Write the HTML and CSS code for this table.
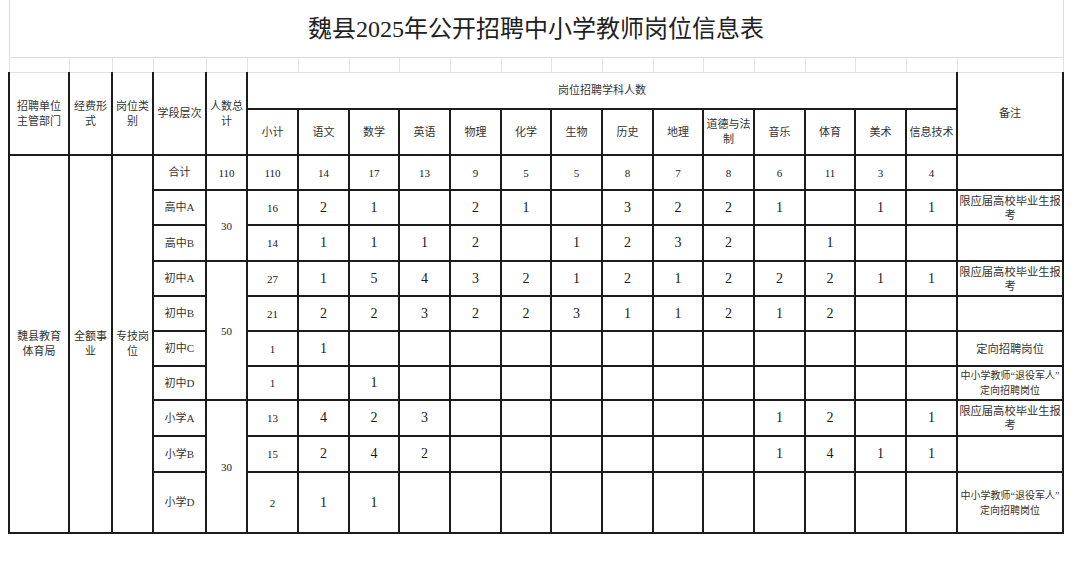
FILE: index.html
```html
<!DOCTYPE html>
<html lang="zh-CN">
<head>
<meta charset="utf-8">
<title>魏县2025年公开招聘中小学教师岗位信息表</title>
<link rel="stylesheet" href="styles.css">
</head>
<body>
<table class="sheet">
  <colgroup>
    <col class="c-dept"><col class="c-fund"><col class="c-type"><col class="c-level"><col class="c-total">
    <col class="c-s"><col class="c-s"><col class="c-s2"><col class="c-s"><col class="c-s"><col class="c-s2"><col class="c-s"><col class="c-s"><col class="c-s2"><col class="c-s"><col class="c-s"><col class="c-s2"><col class="c-s"><col class="c-s">
    <col class="c-note">
  </colgroup>
  <tbody>
    <tr class="r-title"><td class="title" colspan="20">魏县2025年公开招聘中小学教师岗位信息表</td></tr>
    <tr class="r-gap"><td></td><td></td><td></td><td></td><td></td><td></td><td></td><td></td><td></td><td></td><td></td><td></td><td></td><td></td><td></td><td></td><td></td><td></td><td></td><td></td></tr>
    <tr class="r-h1 hd">
      <td rowspan="2">招聘单位<br>主管部门</td>
      <td rowspan="2">经费形<br>式</td>
      <td rowspan="2">岗位类<br>别</td>
      <td rowspan="2">学段层次</td>
      <td rowspan="2">人数总<br>计</td>
      <td colspan="14">岗位招聘学科人数</td>
      <td rowspan="2">备注</td>
    </tr>
    <tr class="r-h2 hd">
      <td>小计</td><td>语文</td><td>数学</td><td>英语</td><td>物理</td><td>化学</td><td>生物</td><td>历史</td><td>地理</td><td>道德与法<br>制</td><td>音乐</td><td>体育</td><td>美术</td><td>信息技术</td>
    </tr>
    <tr class="r35 sm">
      <td rowspan="10" class="lbl">魏县教育<br>体育局</td>
      <td rowspan="10" class="lbl">全额事<br>业</td>
      <td rowspan="10" class="lbl">专技岗<br>位</td>
      <td class="lbl">合计</td>
      <td>110</td><td>110</td><td>14</td><td>17</td><td>13</td><td>9</td><td>5</td><td>5</td><td>8</td><td>7</td><td>8</td><td>6</td><td>11</td><td>3</td><td>4</td>
      <td></td>
    </tr>
    <tr class="r35">
      <td class="lbl">高中A</td>
      <td rowspan="2" class="s">30</td>
      <td class="s">16</td><td>2</td><td>1</td><td></td><td>2</td><td>1</td><td></td><td>3</td><td>2</td><td>2</td><td>1</td><td></td><td>1</td><td>1</td>
      <td class="note">限应届高校毕业生报<br>考</td>
    </tr>
    <tr class="r36">
      <td class="lbl">高中B</td>
      <td class="s">14</td><td>1</td><td>1</td><td>1</td><td>2</td><td></td><td>1</td><td>2</td><td>3</td><td>2</td><td></td><td>1</td><td></td><td></td>
      <td></td>
    </tr>
    <tr class="r35">
      <td class="lbl">初中A</td>
      <td rowspan="4" class="s">50</td>
      <td class="s">27</td><td>1</td><td>5</td><td>4</td><td>3</td><td>2</td><td>1</td><td>2</td><td>1</td><td>2</td><td>2</td><td>2</td><td>1</td><td>1</td>
      <td class="note">限应届高校毕业生报<br>考</td>
    </tr>
    <tr class="r35">
      <td class="lbl">初中B</td>
      <td class="s">21</td><td>2</td><td>2</td><td>3</td><td>2</td><td>2</td><td>3</td><td>1</td><td>1</td><td>2</td><td>1</td><td>2</td><td></td><td></td>
      <td></td>
    </tr>
    <tr class="r35">
      <td class="lbl">初中C</td>
      <td class="s">1</td><td>1</td><td></td><td></td><td></td><td></td><td></td><td></td><td></td><td></td><td></td><td></td><td></td><td></td>
      <td class="note">定向招聘岗位</td>
    </tr>
    <tr class="r34">
      <td class="lbl">初中D</td>
      <td class="s">1</td><td></td><td>1</td><td></td><td></td><td></td><td></td><td></td><td></td><td></td><td></td><td></td><td></td><td></td>
      <td class="note small">中小学教师“退役军人”<br>定向招聘岗位</td>
    </tr>
    <tr class="r36">
      <td class="lbl">小学A</td>
      <td rowspan="3" class="s">30</td>
      <td class="s">13</td><td>4</td><td>2</td><td>3</td><td></td><td></td><td></td><td></td><td></td><td></td><td>1</td><td>2</td><td></td><td>1</td>
      <td class="note">限应届高校毕业生报<br>考</td>
    </tr>
    <tr class="r36">
      <td class="lbl">小学B</td>
      <td class="s">15</td><td>2</td><td>4</td><td>2</td><td></td><td></td><td></td><td></td><td></td><td></td><td>1</td><td>4</td><td>1</td><td>1</td>
      <td></td>
    </tr>
    <tr class="r61">
      <td class="lbl">小学D</td>
      <td class="s">2</td><td>1</td><td>1</td><td></td><td></td><td></td><td></td><td></td><td></td><td></td><td></td><td></td><td></td><td></td>
      <td class="note small">中小学教师“退役军人”<br>定向招聘岗位</td>
    </tr>
  </tbody>
</table>
</body>
</html>
```

FILE: styles.css
```css
html, body {
  margin: 0;
  padding: 0;
  background: #fff;
}

body {
  font-family: "Liberation Serif", "Noto Sans CJK SC", serif;
  color: #1a1a1a;
}

.sheet {
  margin-left: 8px;
  border-collapse: collapse;
  table-layout: fixed;
  width: 1055px;
}

.c-dept { width: 60px; }
.c-fund { width: 43px; }
.c-type { width: 41px; }
.c-level { width: 53px; }
.c-total { width: 41px; }
.c-s { width: 51px; }
.c-s2 { width: 50px; }
.c-note { width: 106px; }

.sheet td {
  padding: 0;
  text-align: center;
  vertical-align: middle;
  white-space: nowrap;
  overflow: hidden;
  border: 2px solid #1c1c1c;
  font-size: 14px;
  line-height: 16px;
}

.r-title td.title {
  height: 57px;
  border: 1px solid #dcdcdc;
  border-top: none;
  font-size: 24px;
  line-height: 30px;
  color: #222;
}

.r-gap td {
  height: 14px;
  border: 1px solid #e2e2e2;
}

.hd td {
  font-size: 11px;
  line-height: 15px;
  color: #333;
}

.r-h1 td {
  height: 35px;
  border-top: 1px solid #b8b8b8;
}

.r-h2 td {
  height: 44px;
}

.sheet td.lbl {
  font-size: 11px;
  line-height: 15px;
  color: #333;
}

.sheet td.s,
.sm td {
  font-size: 11px;
}

.sheet td.note {
  font-size: 11.3px;
  line-height: 14px;
  color: #333;
}

.sheet td.note.small {
  font-size: 10px;
  line-height: 15px;
}

.r34 td { height: 32px; }
.r35 td { height: 33px; }
.r36 td { height: 34px; }
.r61 td { height: 59px; }
```
